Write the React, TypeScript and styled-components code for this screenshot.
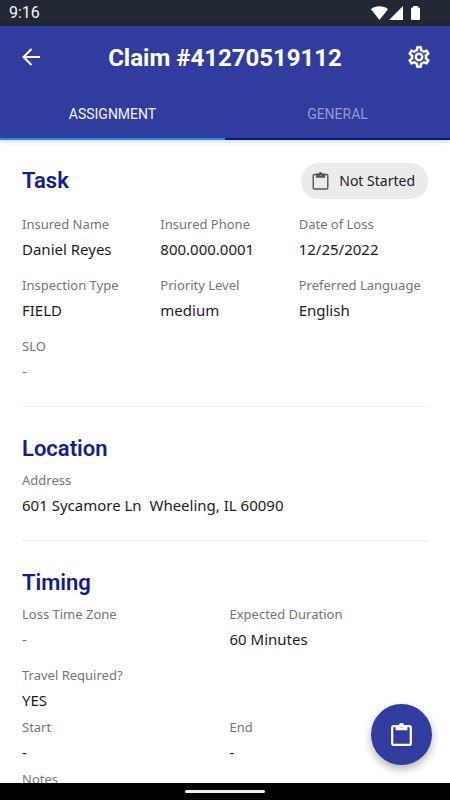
import React from "react";
import styled, { createGlobalStyle } from "styled-components";

const GlobalStyle = createGlobalStyle`
  *, *::before, *::after { box-sizing: border-box; }
  body { margin: 0; background: #fff; }
  h1, h2, dl, dt, dd { margin: 0; }
  button { border: 0; padding: 0; background: none; cursor: pointer; font: inherit; color: inherit; }
`;

const Screen = styled.div`
  position: relative;
  display: flex;
  flex-direction: column;
  height: 100vh;
  overflow: hidden;
  background: #fff;
  color: #1c1c1c;
  font-family: "Noto Sans", sans-serif;
`;

const StatusBar = styled.div`
  display: flex;
  flex: none;
  align-items: center;
  justify-content: space-between;
  height: 26px;
  padding: 0 29px 0 9px;
  background: #212733;
  color: #f4f5f7;
  font: 400 16px/28px Roboto, sans-serif;
`;

const StatusIcons = styled.svg`
  display: block;
  width: 50px;
  height: 16px;
  fill: #fff;
`;

const Header = styled.header`
  position: relative;
  z-index: 1;
  flex: none;
  background: #303d9e;
  color: #fff;
  font-family: Roboto, sans-serif;
  box-shadow: 0 1px 5px rgba(0, 0, 0, 0.2);
`;

const Toolbar = styled.div`
  display: flex;
  align-items: center;
  justify-content: space-between;
  height: 62px;
  padding: 0 18px;
`;

const Title = styled.h1`
  padding-top: 2px;
  font-size: 24px;
  line-height: 34px;
  font-weight: 700;
  white-space: nowrap;
`;

const IconButton = styled.button`
  display: grid;
  place-items: center;
  width: 26px;
  height: 40px;

  svg { display: block; flex: none; }
`;

const Tabs = styled.div`
  display: flex;
`;

const Tab = styled.button<{ $active?: boolean }>`
  flex: 1;
  height: 52px;
  padding-top: 2px;
  border-bottom: 2px solid ${(p) => (p.$active ? "#1791f2" : "#0c1687")};
  color: ${(p) => (p.$active ? "#f1f2fa" : "#949bcd")};
  font-size: 14px;
  line-height: 48px;
`;

const Content = styled.main`
  flex: 1;
  min-height: 0;
  overflow: hidden;
  padding: 23px 22px 0;
`;

const Section = styled.section`
  & + & {
    margin-top: 25px;
    padding-top: 28px;
    border-top: 1px solid #f1f1f1;
  }
`;

const SectionHead = styled.div<{ $roomy?: boolean }>`
  display: flex;
  align-items: center;
  justify-content: space-between;
  margin-bottom: ${(p) => (p.$roomy ? "16px" : "8px")};
`;

const Heading = styled.h2`
  color: #11208f;
  font: 600 22px/28px Roboto, sans-serif;
`;

const Chip = styled.button`
  display: flex;
  align-items: center;
  gap: 10px;
  height: 36px;
  padding: 0 13px 0 11px;
  border-radius: 18px;
  background: #ebebeb;
  color: #222;
  font-size: 14px;
  line-height: 20px;

  svg { color: #555; }
`;

const Fields = styled.dl<{ $columns: number }>`
  display: grid;
  grid-template-columns: repeat(${(p) => p.$columns}, minmax(0, 1fr));
  gap: 17px 9px;

  & + & { margin-top: 8px; }
`;

const FieldBox = styled.div`
  white-space: pre;
`;

const Label = styled.dt`
  margin-bottom: 6px;
  color: #757575;
  font-size: 13px;
  line-height: 18px;
`;

const Value = styled.dd<{ $muted?: boolean }>`
  color: ${(p) => (p.$muted ? "#777" : "#1c1c1c")};
  font-size: 15px;
  line-height: 20px;
`;

const Fab = styled.button`
  position: absolute;
  right: 18px;
  bottom: 35px;
  z-index: 2;
  display: grid;
  place-items: center;
  width: 61px;
  height: 61px;
  border-radius: 50%;
  background: #303d9e;
  color: #fff;
  box-shadow: 0 4px 8px rgba(0, 0, 0, 0.3);
`;

const NavBar = styled.div`
  display: grid;
  flex: none;
  place-items: center;
  height: 17px;
  background: #000;
`;

const NavHandle = styled.div`
  width: 80px;
  height: 3px;
  border-radius: 2px;
  background: #eceff1;
`;

function BackIcon() {
  return (
    <svg width="18" height="18" viewBox="0 0 18 18" fill="none" stroke="currentColor" strokeWidth="2" aria-hidden="true">
      <path d="M18 9H1.5M9.5 1 1.5 9l8 8" />
    </svg>
  );
}

function GearIcon() {
  return (
    <svg width="26" height="26" viewBox="0 0 24 24" fill="currentColor" stroke="currentColor" strokeWidth="0.3" aria-hidden="true">
      <path d="M19.43 12.98c.04-.32.07-.64.07-.98s-.03-.66-.07-.98l2.11-1.65c.19-.15.24-.42.12-.64l-2-3.46c-.09-.16-.26-.25-.44-.25-.06 0-.12.01-.17.03l-2.49 1c-.52-.4-1.08-.73-1.69-.98l-.38-2.65C14.46 2.18 14.25 2 14 2h-4c-.25 0-.46.18-.49.42l-.38 2.65c-.61.25-1.17.59-1.69.98l-2.49-1c-.06-.02-.12-.03-.18-.03-.17 0-.34.09-.43.25l-2 3.46c-.13.22-.07.49.12.64l2.11 1.65c-.04.32-.07.65-.07.98s.03.66.07.98l-2.11 1.65c-.19.15-.24.42-.12.64l2 3.46c.09.16.26.25.44.25.06 0 .12-.01.17-.03l2.49-1c.52.4 1.08.73 1.69.98l.38 2.65c.03.24.24.42.49.42h4c.25 0 .46-.18.49-.42l.38-2.65c.61-.25 1.17-.59 1.69-.98l2.49 1c.06.02.12.03.18.03.17 0 .34-.09.43-.25l2-3.46c.12-.22.07-.49-.12-.64l-2.11-1.65zm-1.98-1.71c.04.31.05.52.05.73s-.02.43-.05.73l-.14 1.13.89.7 1.08.84-.7 1.21-1.27-.51-1.04-.42-.9.68c-.43.32-.84.56-1.25.73l-1.06.43-.16 1.13-.2 1.35h-1.4l-.19-1.35-.16-1.13-1.06-.43c-.43-.18-.83-.41-1.23-.71l-.91-.7-1.06.43-1.27.51-.7-1.21 1.08-.84.89-.7-.14-1.13c-.03-.31-.05-.54-.05-.74s.02-.43.05-.73l.14-1.13-.89-.7-1.08-.84.7-1.21 1.27.51 1.04.42.9-.68c.43-.32.84-.56 1.25-.73l1.06-.43.16-1.13.2-1.35h1.39l.19 1.35.16 1.13 1.06.43c.43.18.83.41 1.23.71l.91.7 1.06-.43 1.27-.51.7 1.21-1.07.85-.89.7.14 1.13zM12 8c-2.21 0-4 1.79-4 4s1.79 4 4 4 4-1.79 4-4-1.79-4-4-4zm0 6c-1.1 0-2-.9-2-2s.9-2 2-2 2 .9 2 2-.9 2-2 2z" />
    </svg>
  );
}

function ClipboardIcon({ width, height, stroke }: { width: number; height: number; stroke: number }) {
  return (
    <svg width={width} height={height} viewBox="0 0 21 23" fill="none" stroke="currentColor" aria-hidden="true">
      <rect x="1.2" y="3.2" width="18.6" height="18.6" rx="1.4" strokeWidth={stroke} />
      <path
        fill="currentColor"
        fillRule="evenodd"
        stroke="none"
        d="M4.6 2.3h3a3 3 0 0 1 5.8 0h3v4.9H4.6zM10.5 2.6a1.1 1.1 0 1 0 0 2.2 1.1 1.1 0 0 0 0-2.2z"
      />
    </svg>
  );
}

function Field({ label, value, muted }: { label: string; value?: string; muted?: boolean }) {
  return (
    <FieldBox>
      <Label>{label}</Label>
      {value && <Value $muted={muted}>{value}</Value>}
    </FieldBox>
  );
}

export default function App() {
  return (
    <Screen>
      <GlobalStyle />
      <StatusBar>
        <span>9:16</span>
        <StatusIcons viewBox="0 0 50 16" aria-hidden="true">
          <path d="M0 4.2C4.5.4 12.5.4 17 4.2L8.5 15zM32 1v14H18zM42 1h5v1.5h1a1 1 0 0 1 1 1V14a1 1 0 0 1-1 1h-7a1 1 0 0 1-1-1V3.500a1 1 0 0 1 1-1h1z" />
        </StatusIcons>
      </StatusBar>
      <Header>
        <Toolbar>
          <IconButton type="button" aria-label="Back">
            <BackIcon />
          </IconButton>
          <Title>Claim #41270519112</Title>
          <IconButton type="button" aria-label="Settings">
            <GearIcon />
          </IconButton>
        </Toolbar>
        <Tabs role="tablist">
          <Tab type="button" role="tab" aria-selected="true" $active>
            ASSIGNMENT
          </Tab>
          <Tab type="button" role="tab" aria-selected="false">
            GENERAL
          </Tab>
        </Tabs>
      </Header>
      <Content>
        <Section>
          <SectionHead $roomy>
            <Heading>Task</Heading>
            <Chip type="button">
              <ClipboardIcon width={17} height={18} stroke={1.8} />
              Not Started
            </Chip>
          </SectionHead>
          <Fields $columns={3}>
            <Field label="Insured Name" value="Daniel Reyes" />
            <Field label="Insured Phone" value="800.000.0001" />
            <Field label="Date of Loss" value="12/25/2022" />
            <Field label="Inspection Type" value="FIELD" />
            <Field label="Priority Level" value="medium" />
            <Field label="Preferred Language" value="English" />
            <Field label="SLO" value="-" muted />
          </Fields>
        </Section>
        <Section>
          <SectionHead>
            <Heading>Location</Heading>
          </SectionHead>
          <Fields $columns={1}>
            <Field label="Address" value="601 Sycamore Ln  Wheeling, IL 60090" />
          </Fields>
        </Section>
        <Section>
          <SectionHead>
            <Heading>Timing</Heading>
          </SectionHead>
          <Fields $columns={2}>
            <Field label="Loss Time Zone" value="-" muted />
            <Field label="Expected Duration" value="60 Minutes" />
            <Field label="Travel Required?" value="YES" />
          </Fields>
          <Fields $columns={2}>
            <Field label="Start" value="-" />
            <Field label="End" value="-" />
          </Fields>
          <Fields $columns={1}>
            <Field label="Notes" />
          </Fields>
        </Section>
      </Content>
      <Fab type="button" aria-label="Open task list">
        <ClipboardIcon width={21} height={23} stroke={2.2} />
      </Fab>
      <NavBar>
        <NavHandle />
      </NavBar>
    </Screen>
  );
}
